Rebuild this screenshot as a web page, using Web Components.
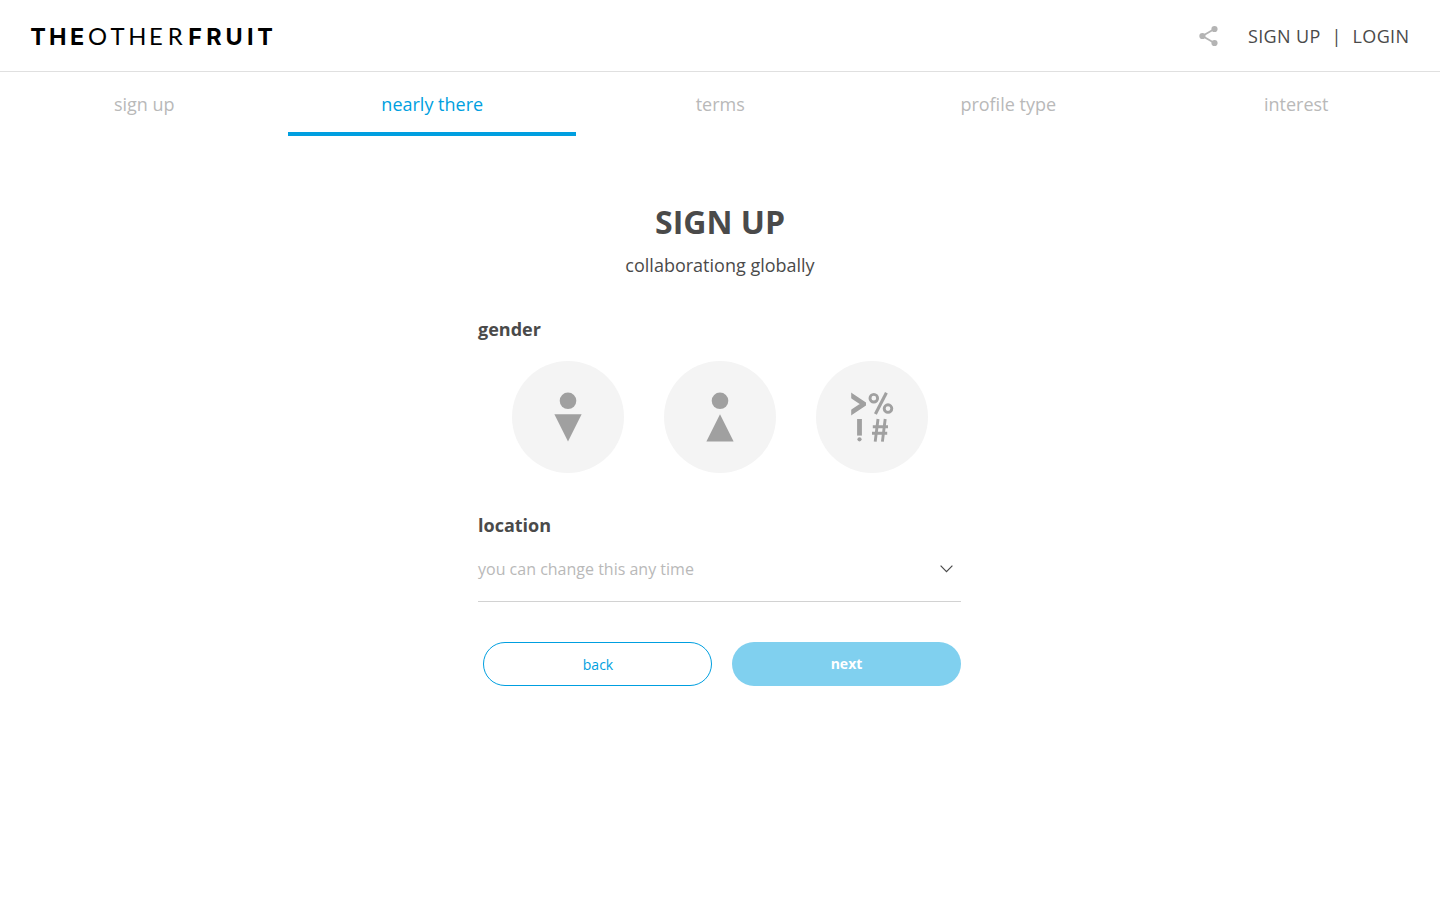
<!DOCTYPE html>
<html lang="en">
<head>
<meta charset="utf-8">
<title>The Other Fruit</title>
<style>
html,body{margin:0;background:#fff}
body{font-family:"Open Sans",sans-serif;color:#4a4a4a;font-size:18px;min-height:100vh}
</style>
</head>
<body>
<fruit-app></fruit-app>
<script>
const define = (name, html) => customElements.define(name, class extends HTMLElement {
  constructor() {
    super();
    this.attachShadow({mode: 'open'}).innerHTML = html;
  }
});

define('fruit-logo', `<style>
:host{display:block;width:243px;height:25px}
svg{display:block;overflow:visible}
text{font-family:Lato,sans-serif;font-size:23.8px;font-weight:400;fill:#000}
.b{font-family:Inter,sans-serif;font-size:23.4px;font-weight:700}
</style>
<svg width="243" height="25"><text y="22"><tspan class="b" x="0.2 19 40">THE</tspan><tspan x="58 80.4 98.2 119 137.7">OTHER</tspan><tspan class="b" x="158.3 176.3 195.6 217.1 227.2">FRUIT</tspan></text></svg>`);

define('share-icon', `<style>:host{display:block;width:20px;height:22px}svg{display:block}</style>
<svg width="20" height="22" viewBox="0 0 20 22" fill="#b4b4b4"><path d="M15.4 4 3.4 11 15.4 18" fill="none" stroke="#b4b4b4" stroke-width="1.8"/><circle cx="15.5" cy="4" r="3.1"/><circle cx="3.4" cy="11" r="3.1"/><circle cx="15.5" cy="18" r="3.1"/></svg>`);

define('app-header', `<style>
:host{display:flex;align-items:center;justify-content:space-between;height:71px;padding:0 30.6px 0 30px;border-bottom:1px solid #e0e0e0}
nav{display:flex;align-items:center;line-height:24px;letter-spacing:.36px;padding-top:1px}
share-icon{margin-right:29px}
.bar{margin:0 10.8px}
</style>
<fruit-logo></fruit-logo>
<nav><share-icon></share-icon><span>SIGN UP</span><span class="bar">|</span><span>LOGIN</span></nav>`);

define('step-tab', `<style>
:host{display:flex;justify-content:center;box-sizing:border-box;height:64px;padding:20px 0 0 .5px;line-height:25px;color:#b9b9b9;border-bottom:4px solid transparent}
:host([active]){color:#009fe0;border-color:#009fe0}
</style><slot></slot>`);

define('step-tabs', `<style>:host{display:grid;grid-template-columns:repeat(5,1fr)}</style><slot></slot>`);

define('gender-option', `<style>
:host{display:grid;place-items:center;width:112px;height:112px;border-radius:50%;background:#f4f4f4}
</style><slot></slot>`);

define('person-icon', `<style>
:host{display:block;width:28px;height:50px}
svg{display:block;fill:#a0a0a0}
.up{display:none}
:host([female]) .up{display:block}
:host([female]) .down{display:none}
</style>
<svg width="28" height="50"><circle cx="14" cy="8.8" r="8.3"/><path class="down" d="M.4 22.3H27.6L14 49.5Z"/><path class="up" d="M.4 49.5H27.6L14 22.3Z"/></svg>`);

define('symbols-icon', `<style>
:host{display:block;width:44px;height:52px}
svg{display:block;fill:none;stroke:#a0a0a0}
</style>
<svg width="44" height="52">
<clipPath id="c"><rect x="1.2" y="0" width="14.8" height="27"/></clipPath>
<path clip-path="url(#c)" d="M-1 3 14 13 -1 23" stroke-width="4.7"/>
<path d="M36.4 1.8 25.4 23" stroke-width="3.1"/>
<circle cx="23.8" cy="7.2" r="3.8" stroke-width="2.9"/><circle cx="38" cy="17.6" r="3.8" stroke-width="2.9"/>
<path d="M9.5 28V44.6" stroke-width="4.8"/><circle cx="9.5" cy="48.3" r="2.1" fill="#a0a0a0" stroke="none"/>
<path d="M28 28 25.2 50.6M35.2 28 32.4 50.6M22.8 35.8H38M22 42.2H37.2" stroke-width="2.9"/>
</svg>`);

define('form-label', `<style>:host{display:block;font-weight:700;line-height:25px}</style><slot></slot>`);

define('select-field', `<style>
:host{display:flex;justify-content:space-between;align-items:center;height:61px;padding:0 8px 2px 0;border-bottom:1px solid #d2d2d2;font-size:16px;color:#b9b9b9}
svg{display:block}
</style><slot></slot><svg width="13" height="9" viewBox="0 0 13 9" fill="none" stroke="#4a4a4a" stroke-width="1.2"><path d="M.6 1.6 6.5 7.6 12.4 1.6"/></svg>`);

define('pill-button', `<style>
:host{display:flex;align-items:center;justify-content:center;box-sizing:border-box;width:229px;height:44px;border-radius:22px;border:1px solid #009fe0;color:#009fe0;font-size:14px;padding:1px 0 0 1px}
:host([primary]){border:0;background:#80d0ef;color:#fff;font-weight:700;padding:0 0 1px}
</style><slot></slot>`);

define('sign-up-form', `<style>
:host{display:flex;flex-direction:column;width:484px;margin:0 auto}
h1{margin:64px 0 0;text-align:center;font-size:32px;line-height:44px;font-weight:700}
p{margin:9px 0 0;text-align:center;line-height:25px}
.gender{margin-top:39px}
.options{display:flex;justify-content:center;gap:40px;margin-top:19px}
.location{margin-top:40px}
select-field{margin-right:1px}
.actions{display:flex;justify-content:flex-end;gap:20px;margin:40px 1px 0 0}
</style>
<h1>SIGN UP</h1><p>collaborationg globally</p>
<form-label class="gender">gender</form-label>
<div class="options"><gender-option><person-icon></person-icon></gender-option><gender-option><person-icon female></person-icon></gender-option><gender-option><symbols-icon></symbols-icon></gender-option></div>
<form-label class="location">location</form-label>
<select-field>you can change this any time</select-field>
<div class="actions"><pill-button>back</pill-button><pill-button primary>next</pill-button></div>`);

define('fruit-app', `<style>:host{display:block}</style>
<app-header></app-header>
<step-tabs><step-tab>sign up</step-tab><step-tab active>nearly there</step-tab><step-tab>terms</step-tab><step-tab>profile type</step-tab><step-tab>interest</step-tab></step-tabs>
<sign-up-form></sign-up-form>`);
</script>
</body>
</html>
